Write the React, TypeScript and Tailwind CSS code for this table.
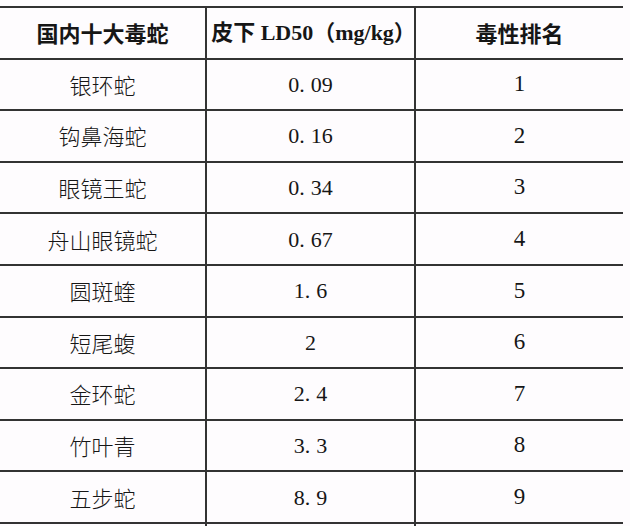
const rows = [
  { name: "银环蛇", ld: "0.09", rank: "1" },
  { name: "钩鼻海蛇", ld: "0.16", rank: "2" },
  { name: "眼镜王蛇", ld: "0.34", rank: "3" },
  { name: "舟山眼镜蛇", ld: "0.67", rank: "4" },
  { name: "圆斑蝰", ld: "1.6", rank: "5" },
  { name: "短尾蝮", ld: "2", rank: "6" },
  { name: "金环蛇", ld: "2.4", rank: "7" },
  { name: "竹叶青", ld: "3.3", rank: "8" },
  { name: "五步蛇", ld: "8.9", rank: "9" },
];

const cjk = "font-['Noto_Sans_CJK_SC',sans-serif]";
const serif = "font-['Liberation_Serif','Noto_Sans_CJK_SC',serif]";

// SimSun-style numbers: the period takes a wider cell
function Dose({ value }: { value: string }) {
  const [whole, frac] = value.split(".");
  if (frac === undefined) return <>{whole}</>;
  return (
    <>
      {whole}
      <span className="mr-[6px]">.</span>
      {frac}
    </>
  );
}

export default function App() {
  const cell = "flex items-center justify-center border-b-2 border-[#333]";
  return (
    <div className="h-screen overflow-hidden bg-[#fefcfe] pt-[6px] text-[#161616]">
      <div className="grid w-[623px] grid-cols-[207px_209px_207px] auto-rows-[51.6px] border-t-2 border-[#333]">
        <div className={`${cell} border-r-2 ${cjk} text-[22px] font-bold`}>国内十大毒蛇</div>
        <div className={`${cell} border-r-2 ${serif} text-[22px] font-bold whitespace-nowrap`}>
          <span className="ml-[6px]">皮下 LD50（mg/kg）</span>
        </div>
        <div className={`${cell} ${cjk} text-[22px] font-bold`}>毒性排名</div>

        {rows.map((r) => (
          <div key={r.name} className="contents">
            <div className={`${cell} border-r-2 ${cjk} text-[22px] font-light`}>{r.name}</div>
            <div className={`${cell} border-r-2 ${serif} text-[22px]`}>
              <Dose value={r.ld} />
            </div>
            <div className={`${cell} ${serif} text-[23px]`}>{r.rank}</div>
          </div>
        ))}

        {/* next row, cut off by the frame */}
        <div className="border-r-2 border-[#333]" />
        <div className="border-r-2 border-[#333]" />
        <div />
      </div>
    </div>
  );
}
